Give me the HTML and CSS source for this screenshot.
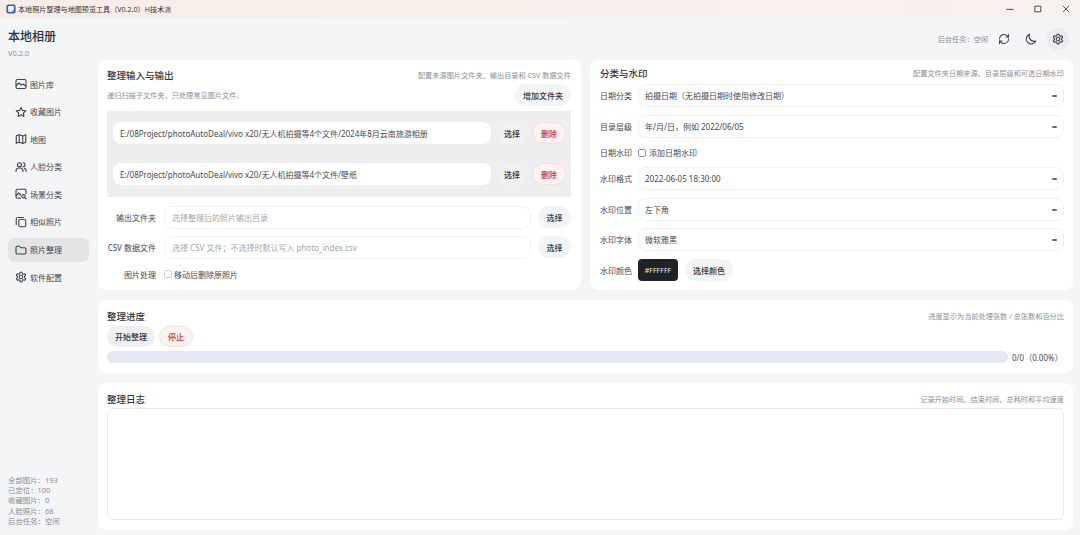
FILE: index.html
```html
<!DOCTYPE html>
<html lang="zh-CN">
<head>
    <meta charset="UTF-8">
    <meta name="viewport" content="width=device-width, initial-scale=1.0">
    <title>本地照片整理与地图预览工具</title>
    <link rel="stylesheet" href="styles.css">
</head>
<body>
    <div class="titlebar">
        <svg class="app-icon" viewBox="0 0 12 12"><rect x="0.5" y="0.5" width="11" height="11" rx="2.5" fill="#2f63c8"/><rect x="2.5" y="2.5" width="7" height="7" rx="1.5" fill="#f4f7fd"/><path d="M6.5 9.5 L9.5 6.5 V9.5 Z" fill="#e0574f"/></svg>
        <span class="title-text">本地照片整理与地图预览工具（V0.2.0）H技术派</span>
        <div class="win-controls">
            <svg viewBox="0 0 10 10"><path d="M1 5.5h8" stroke="#222" stroke-width="1"/></svg>
            <svg viewBox="0 0 10 10"><rect x="1.5" y="1.5" width="7" height="7" fill="none" stroke="#222" stroke-width="1"/></svg>
            <svg viewBox="0 0 10 10"><path d="M1.5 1.5l7 7M8.5 1.5l-7 7" stroke="#222" stroke-width="0.9"/></svg>
        </div>
    </div>

    <div class="app">
        <aside class="sidebar">
            <div class="brand">本地相册</div>
            <div class="version">V0.2.0</div>
            <nav class="nav">
                <div class="nav-item">
                    <svg viewBox="0 0 24 24"><rect x="2" y="3" width="20" height="18" rx="3"/><path d="M2.500 15l5.500-5 5 4 3-2 5.500 4"/></svg>
                    <span>图片库</span>
                </div>
                <div class="nav-item">
                    <svg viewBox="0 0 24 24"><path d="M12 2.800l2.900 6 6.600.9-4.800 4.600 1.200 6.600-5.900-3.200-5.900 3.200 1.200-6.600L2.500 9.700l6.600-.9z"/></svg>
                    <span>收藏图片</span>
                </div>
                <div class="nav-item">
                    <svg viewBox="0 0 24 24"><path d="M2.500 5.500l6-2 7 2.500 6-2.500v15l-6 2.500-7-2.500-6 2z"/><path d="M8.500 3.500v15M15.500 6v15"/></svg>
                    <span>地图</span>
                </div>
                <div class="nav-item">
                    <svg viewBox="0 0 24 24"><circle cx="9" cy="7.500" r="4"/><path d="M2 21v-2a6 6 0 0 1 6-5h2a6 6 0 0 1 6 5v2"/><path d="M16 3.500a4 4 0 0 1 0 8M19 14.500a5.500 5.500 0 0 1 3 4.500v2"/></svg>
                    <span>人脸分类</span>
                </div>
                <div class="nav-item">
                    <svg viewBox="0 0 24 24"><path d="M11 20.500H5a3 3 0 0 1-3-3v-12a3 3 0 0 1 3-3h14a3 3 0 0 1 3 3v6"/><path d="M2.500 15l5-5 4 4"/><circle cx="17" cy="16.500" r="3.200"/><path d="M19.500 19l2.800 2.800"/></svg>
                    <span>场景分类</span>
                </div>
                <div class="nav-item">
                    <svg viewBox="0 0 24 24"><rect x="7.500" y="7" width="14" height="14.500" rx="3"/><path d="M17 3H6a3.500 3.500 0 0 0-3.500 3.500V17"/></svg>
                    <span>相似照片</span>
                </div>
                <div class="nav-item active">
                    <svg viewBox="0 0 24 24"><path d="M2 7a2.500 2.500 0 0 1 2.500-2.500h4.500l2.500 3h8a2.500 2.500 0 0 1 2.500 2.500v7.500a2.500 2.500 0 0 1-2.500 2.500h-15A2.500 2.500 0 0 1 2 17.500z"/></svg>
                    <span>照片整理</span>
                </div>
                <div class="nav-item">
                    <svg viewBox="0 0 24 24"><path d="M12.220 2h-.44a2 2 0 0 0-2 2v.18a2 2 0 0 1-1 1.730l-.43.25a2 2 0 0 1-2 0l-.15-.08a2 2 0 0 0-2.730.73l-.22.38a2 2 0 0 0 .73 2.730l.15.1a2 2 0 0 1 1 1.720v.51a2 2 0 0 1-1 1.740l-.15.09a2 2 0 0 0-.73 2.730l.22.38a2 2 0 0 0 2.730.73l.15-.08a2 2 0 0 1 2 0l.43.25a2 2 0 0 1 1 1.730V20a2 2 0 0 0 2 2h.44a2 2 0 0 0 2-2v-.18a2 2 0 0 1 1-1.730l.43-.25a2 2 0 0 1 2 0l.15.08a2 2 0 0 0 2.730-.73l.22-.39a2 2 0 0 0-.73-2.730l-.15-.08a2 2 0 0 1-1-1.740v-.5a2 2 0 0 1 1-1.740l.15-.09a2 2 0 0 0 .73-2.730l-.22-.38a2 2 0 0 0-2.730-.73l-.15.08a2 2 0 0 1-2 0l-.43-.25a2 2 0 0 1-1-1.730V4a2 2 0 0 0-2-2z"/><circle cx="12" cy="12" r="3.500"/></svg>
                    <span>软件配置</span>
                </div>
            </nav>
            <div class="stats">
                <div>全部图片：193</div>
                <div>已定位：100</div>
                <div>收藏图片：0</div>
                <div>人脸照片：68</div>
                <div>后台任务：空闲</div>
            </div>
        </aside>

        <main class="main">
            <header class="topbar">
                <span class="task-status">后台任务：空闲</span>
                <div class="top-btn">
                    <svg viewBox="0 0 24 24"><path d="M3 12a9 9 0 0 1 9-9 9.750 9.750 0 0 1 6.740 2.740L21 8"/><path d="M21 3v5h-5"/><path d="M21 12a9 9 0 0 1-9 9 9.750 9.750 0 0 1-6.740-2.740L3 16"/><path d="M8 16H3v5"/></svg>
                </div>
                <div class="top-btn">
                    <svg viewBox="0 0 24 24"><path d="M21.500 16A10 10 0 0 1 9 2.500a10 10 0 1 0 12.500 13.500z"/></svg>
                </div>
                <div class="top-btn on">
                    <svg viewBox="0 0 24 24"><path d="M12.220 2h-.44a2 2 0 0 0-2 2v.18a2 2 0 0 1-1 1.730l-.43.25a2 2 0 0 1-2 0l-.15-.08a2 2 0 0 0-2.730.73l-.22.38a2 2 0 0 0 .73 2.730l.15.1a2 2 0 0 1 1 1.720v.51a2 2 0 0 1-1 1.740l-.15.09a2 2 0 0 0-.73 2.730l.22.38a2 2 0 0 0 2.730.73l.15-.08a2 2 0 0 1 2 0l.43.25a2 2 0 0 1 1 1.730V20a2 2 0 0 0 2 2h.44a2 2 0 0 0 2-2v-.18a2 2 0 0 1 1-1.730l.43-.25a2 2 0 0 1 2 0l.15.08a2 2 0 0 0 2.730-.73l.22-.39a2 2 0 0 0-.73-2.730l-.15-.08a2 2 0 0 1-1-1.740v-.5a2 2 0 0 1 1-1.740l.15-.09a2 2 0 0 0 .73-2.730l-.22-.38a2 2 0 0 0-2.730-.73l-.15.08a2 2 0 0 1-2 0l-.43-.25a2 2 0 0 1-1-1.730V4a2 2 0 0 0-2-2z"/><circle cx="12" cy="12" r="3.500"/></svg>
                </div>
            </header>

            <div class="top-cards">
                <section class="card card-input">
                    <div class="card-head">
                        <h2>整理输入与输出</h2>
                        <span class="desc">配置来源图片文件夹、输出目录和 CSV 数据文件</span>
                    </div>
                    <div class="hint-row">
                        <span class="desc">递归扫描子文件夹，只处理常见图片文件。</span>
                        <button class="btn">增加文件夹</button>
                    </div>
                    <div class="folder-box">
                        <div class="folder-row">
                            <div class="field">E:/08Project/photoAutoDeal/vivo x20/无人机拍摄等4个文件/2024年8月云南旅游相册</div>
                            <button class="btn plain">选择</button>
                            <button class="btn danger">删除</button>
                        </div>
                        <div class="folder-row">
                            <div class="field">E:/08Project/photoAutoDeal/vivo x20/无人机拍摄等4个文件/壁纸</div>
                            <button class="btn plain">选择</button>
                            <button class="btn danger">删除</button>
                        </div>
                    </div>
                    <div class="path-row">
                        <label>输出文件夹</label>
                        <div class="field outlined placeholder">选择整理后的照片输出目录</div>
                        <button class="btn">选择</button>
                    </div>
                    <div class="path-row">
                        <label>CSV 数据文件</label>
                        <div class="field outlined placeholder">选择 CSV 文件；不选择时默认写入 photo_index.csv</div>
                        <button class="btn">选择</button>
                    </div>
                    <div class="check-row">
                        <label>图片处理</label>
                        <span class="check faint"></span>
                        <span>移动后删除原照片</span>
                    </div>
                </section>

                <section class="card card-water">
                    <div class="card-head">
                        <h2>分类与水印</h2>
                        <span class="desc">配置文件夹日期来源、目录层级和可选日期水印</span>
                    </div>
                    <div class="form-row">
                        <label>日期分类</label>
                        <div class="field outlined select">拍摄日期（无拍摄日期时使用修改日期）<i class="grip"></i></div>
                    </div>
                    <div class="form-row">
                        <label>目录层级</label>
                        <div class="field outlined select">年/月/日，例如 2022/06/05<i class="grip"></i></div>
                    </div>
                    <div class="form-row short">
                        <label>日期水印</label>
                        <span class="check"></span>
                        <span>添加日期水印</span>
                    </div>
                    <div class="form-row">
                        <label>水印格式</label>
                        <div class="field outlined select">2022-06-05 18:30:00<i class="grip"></i></div>
                    </div>
                    <div class="form-row">
                        <label>水印位置</label>
                        <div class="field outlined select">左下角<i class="grip"></i></div>
                    </div>
                    <div class="form-row">
                        <label>水印字体</label>
                        <div class="field outlined select">微软雅黑<i class="grip"></i></div>
                    </div>
                    <div class="form-row">
                        <label>水印颜色</label>
                        <div class="swatch">#FFFFFF</div>
                        <button class="btn">选择颜色</button>
                    </div>
                </section>
            </div>

            <section class="card card-progress">
                <div class="card-head">
                    <h2>整理进度</h2>
                    <span class="desc">进度显示为当前处理张数 / 总张数和百分比</span>
                </div>
                <div class="actions">
                    <button class="btn start">开始整理</button>
                    <button class="btn danger">停止</button>
                </div>
                <div class="progress-row">
                    <div class="progress"></div>
                    <span class="progress-text">0/0（0.00%）</span>
                </div>
            </section>

            <section class="card card-log">
                <div class="card-head">
                    <h2>整理日志</h2>
                    <span class="desc">记录开始时间、结束时间、总耗时和平均速度</span>
                </div>
                <div class="log-box"></div>
            </section>
        </main>
    </div>
</body>
</html>
```

FILE: styles.css
```css
* {
    box-sizing: border-box;
}

body {
    margin: 0;
    width: 1080px;
    height: 535px;
    overflow: hidden;
    display: flex;
    flex-direction: column;
    font-family: "Noto Sans", "Noto Sans CJK SC", sans-serif;
    font-size: 8px;
    color: #3c3f44;
    background-color: #f3f5f7;
}

svg {
    fill: none;
    stroke: #3d4248;
    stroke-width: 2.2;
    stroke-linejoin: round;
    stroke-linecap: round;
}

.titlebar {
    height: 18px;
    flex: none;
    display: flex;
    align-items: center;
    padding-left: 6px;
    background: linear-gradient(90deg, #f9ece7, #f8f0ec 50%, #f7f1ef);
}

.app-icon {
    width: 10px;
    height: 10px;
    stroke: none;
}

.title-text {
    margin-left: 2px;
    font-size: 7.100px;
    color: #333;
}

.win-controls {
    margin-left: auto;
    display: flex;
    gap: 20px;
    padding-right: 10px;
}

.win-controls svg {
    width: 8px;
    height: 8px;
}

.app {
    flex: 1;
    min-height: 0;
    display: flex;
}

.sidebar {
    width: 98px;
    flex: none;
    display: flex;
    flex-direction: column;
    padding: 10px 9px 9px 8px;
}

.brand {
    font-size: 12px;
    line-height: 18px;
    font-weight: 500;
    color: #2c2f33;
}

.version {
    margin-top: 2px;
    font-size: 7.500px;
    line-height: 11px;
    color: #8d9196;
}

.nav {
    margin-top: 13px;
    display: flex;
    flex-direction: column;
    gap: 3.600px;
}

.nav-item {
    height: 24px;
    display: flex;
    align-items: center;
    gap: 3px;
    padding-left: 7px;
    border-radius: 6px;
    font-size: 8px;
    color: #43474c;
}

.nav-item svg {
    width: 12px;
    height: 12px;
}

.nav-item.active {
    background-color: #e2e4e6;
}

.stats {
    margin-top: auto;
    font-size: 7.400px;
    line-height: 10.200px;
    color: #8b8f94;
}

.main {
    flex: 1;
    min-width: 0;
    display: flex;
    flex-direction: column;
    padding-right: 7px;
}

.topbar {
    height: 42px;
    flex: none;
    display: flex;
    align-items: center;
    justify-content: flex-end;
    padding-right: 4px;
}

.task-status {
    font-size: 7.200px;
    color: #8b8f94;
}

.top-btn {
    width: 22px;
    height: 22px;
    margin-left: 5px;
    display: flex;
    align-items: center;
    justify-content: center;
    border-radius: 50%;
}

.top-btn svg {
    width: 12px;
    height: 12px;
}

.top-btn.on {
    background-color: #e9ebee;
}

.top-cards {
    height: 230px;
    flex: none;
    display: grid;
    grid-template-columns: 1fr 1fr;
    gap: 9px;
}

.card {
    background: #fff;
    border-radius: 8px;
    padding: 0 9px;
}

.card-input {
    padding-right: 10px;
}

.card-water {
    padding-left: 10px;
}

.card-head {
    height: 29px;
    display: flex;
    align-items: center;
    justify-content: space-between;
    padding-top: 1px;
}

h2 {
    margin: 0;
    font-size: 9.500px;
    font-weight: 500;
    color: #33363a;
}

.desc {
    font-size: 7.200px;
    color: #8b8f94;
}

.hint-row {
    height: 22px;
    margin-top: -5px;
    display: flex;
    align-items: center;
    justify-content: space-between;
}

.btn {
    height: 22px;
    padding: 0 8px;
    border: none;
    border-radius: 11px;
    background-color: #f3f4f6;
    font-family: inherit;
    font-size: 8px;
    font-weight: 500;
    color: #33363a;
}

.btn.plain {
    margin-left: 6px;
    width: 30px;
    padding: 0;
    background-color: #f1f1f1;
}

.btn.danger {
    margin-left: 5px;
    background-color: #fef3f3;
    border: 1px solid #f9dcdc;
    color: #c9302c;
    padding: 0 8px;
}

.folder-box {
    margin-top: 5px;
    height: 86px;
    display: flex;
    flex-direction: column;
    justify-content: space-between;
    padding: 11px 5px 12px 6px;
    background-color: #eeeeee;
}

.folder-row {
    display: flex;
    align-items: center;
}

.field {
    flex: 1;
    min-width: 0;
    height: 22px;
    display: flex;
    align-items: center;
    padding-left: 7px;
    border-radius: 8px;
    background: #fff;
    font-size: 8px;
    color: #45484d;
    white-space: nowrap;
}

.field.outlined {
    height: 23px;
    border: 1px solid #eff0f2;
}

.field.placeholder {
    color: #a4a7ab;
}

.path-row {
    height: 24px;
    margin-top: 8px;
    display: flex;
    align-items: center;
}

.path-row + .path-row {
    margin-top: 6px;
}

.path-row label, .check-row label {
    width: 49px;
    margin-right: 8px;
    text-align: right;
    color: #44474c;
}

.path-row .btn {
    width: 33px;
    margin-left: 7px;
    padding: 0;
}

.check-row {
    margin-top: 7px;
    height: 16px;
    display: flex;
    align-items: center;
    color: #44474c;
}

.check {
    width: 8px;
    height: 8px;
    margin-right: 3px;
    border: 1px solid #8f9297;
    border-radius: 2px;
    background: #fff;
}

.check.faint {
    margin-right: 2px;
    border-color: #cfd1d4;
}

.card-water .card-head {
    height: 24px;
}

.form-row {
    height: 23px;
    margin-bottom: 7.600px;
    display: flex;
    align-items: center;
    color: #44474c;
}

.form-row.short {
    height: 16px;
    margin-top: -0.500px;
    margin-bottom: 6.500px;
}

.form-row label {
    width: 38px;
    flex: none;
}

.select {
    position: relative;
    padding-left: 6px;
}

.grip {
    position: absolute;
    right: 6px;
    top: 10px;
    width: 5px;
    height: 2px;
    background-color: #666a70;
    border-radius: 1px;
}

.swatch {
    width: 40px;
    height: 22px;
    display: flex;
    align-items: center;
    justify-content: center;
    margin-right: 7px;
    border-radius: 4px;
    background-color: #1f2328;
    font-size: 7px;
    color: #e8e8e8;
}

.card-progress {
    height: 73px;
    flex: none;
    margin-top: 10px;
}

.card-progress .card-head {
    height: 26px;
    padding-top: 6px;
}

.actions {
    display: flex;
}

.btn.start {
    background-color: #eff0f2;
}

.actions .btn {
    height: 21px;
}

.actions .btn.danger {
    margin-left: 4px;
}

.progress-row {
    margin-top: 4px;
    height: 12px;
    display: flex;
    align-items: center;
}

.progress {
    flex: 1;
    height: 12px;
    border-radius: 6px;
    background-color: #e5e8f0;
}

.progress-text {
    width: 56px;
    padding-left: 4px;
    font-size: 8px;
    color: #4a4d52;
    white-space: nowrap;
}

.card-log {
    flex: none;
    height: 147px;
    margin-top: 10px;
}

.card-log .card-head {
    height: 25px;
    padding-top: 6px;
}

.log-box {
    height: 112px;
    border: 1px solid #e9eaec;
    border-radius: 6px;
    background: #fff;
}
```
